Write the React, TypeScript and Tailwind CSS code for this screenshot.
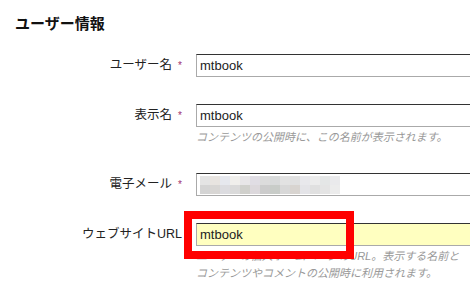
import type { ReactNode } from 'react'

const FONT = { fontFamily: '"Liberation Sans", "Noto Sans CJK JP", sans-serif' }

// ぼかし処理されたメールアドレス
const MOSAIC: string[][] = [
  ['#e4e4e4', '#e8e4e0', '#e6e8ee', '#f0efec', '#e8e6e8', '#e0dde4', '#dcdcdc', '#d8dada', '#e2e2e2', '#e0e0e0', '#e8e8ec', '#ececec', '#e4e6e6', '#eaeaec'],
  ['#d4d4d4', '#d8d6d4', '#dcdce0', '#dadada', '#d0d0cc', '#dcd8dc', '#cccccc', '#c8ccc8', '#d8d8d8', '#d8d4d0', '#e4e4e8', '#e0e0e0', '#e4e4e4', '#ececec'],
]

function Field({
  label,
  required,
  children,
  hint,
  highlight,
}: {
  label: ReactNode
  required?: boolean
  children?: ReactNode
  hint?: string[]
  highlight?: boolean
}) {
  return (
    <div className="flex items-start pb-[27px]">
      <div className="flex h-[23px] w-[182px] shrink-0 items-center justify-end text-[12.5px] text-[#222]">
        <span>{label}</span>
        {required && <span className="ml-[6px] text-[10px] text-[#a0306e]">*</span>}
      </div>
      <div className="ml-[14px] w-[320px] shrink-0">
        <div
          className={`flex h-[23px] items-center border border-[#aaa] border-t-[#333] pl-[3px] text-[13px] text-[#222] ${
            highlight ? 'bg-[#ffffc0]' : 'bg-white'
          }`}
        >
          {children}
        </div>
        {hint && (
          <div className="mt-[2px] text-[11px] italic leading-[17px] text-[#999]">
            {hint.map(line => (
              <div key={line} className="whitespace-nowrap">{line}</div>
            ))}
          </div>
        )}
      </div>
    </div>
  )
}

export default function App() {
  return (
    <div className="relative h-[297px] w-[470px] overflow-hidden bg-white" style={FONT}>
      <h2 className="pl-[15px] pt-[13px] text-[15px] font-bold leading-[22px] text-[#111]">ユーザー情報</h2>

      <div className="mt-[19px]">
        <Field label="ユーザー名" required>mtbook</Field>
        <Field label="表示名" required hint={['コンテンツの公開時に、この名前が表示されます。']}>
          mtbook
        </Field>
        <Field label="電子メール" required>
          <div className="flex flex-col">
            {MOSAIC.map((row, i) => (
              <div key={i} className="flex">
                {row.map((c, j) => (
                  <div key={j} className="h-[9px] w-[10px]" style={{ backgroundColor: c }} />
                ))}
              </div>
            ))}
          </div>
        </Field>
        <Field
          label="ウェブサイトURL"
          highlight
          hint={[
            'ユーザーの個人ホームページのURL。表示する名前と',
            'コンテンツやコメントの公開時に利用されます。',
          ]}
        >
          mtbook
        </Field>
      </div>

      {/* 注目枠 */}
      <div className="absolute left-[184px] top-[211px] h-[48px] w-[170px] border-[8px] border-[#ff0000]" />
    </div>
  )
}
